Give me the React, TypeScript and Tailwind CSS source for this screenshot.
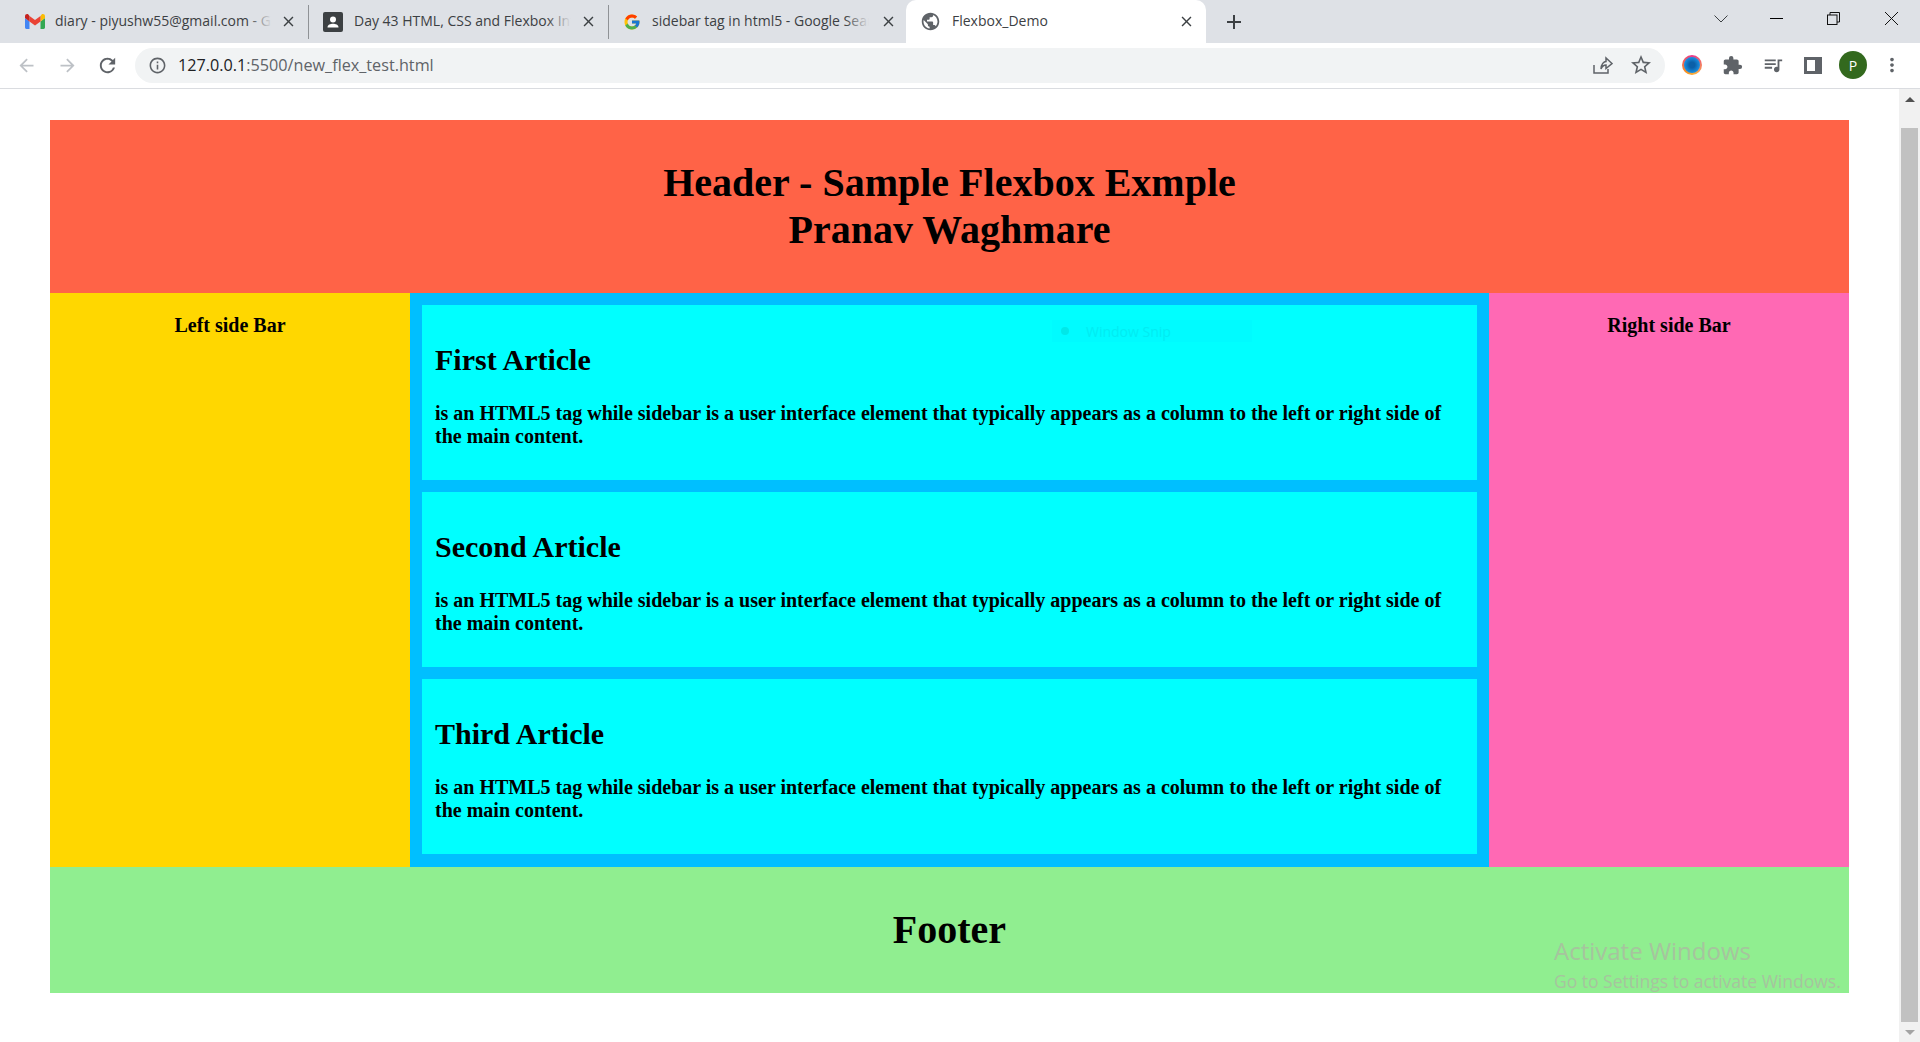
import { FcGoogle } from "react-icons/fc";
import {
  MdAdd,
  MdArrowBack,
  MdArrowForward,
  MdClose,
  MdExtension,
  MdInfoOutline,
  MdMoreVert,
  MdPublic,
  MdQueueMusic,
  MdRefresh,
  MdStarBorder,
} from "react-icons/md";
import type { ReactNode } from "react";

const body =
  "is an HTML5 tag while sidebar is a user interface element that typically appears as a column to the left or right side of the main content.";

function GmailIcon() {
  return (
    <svg width="20" height="16" viewBox="0 0 20 16">
      <path d="M1.4 15H4.5V7.4L0 4V13.6C0 14.4.6 15 1.4 15Z" fill="#4285f4" />
      <path d="M15.5 15H18.6C19.4 15 20 14.4 20 13.6V4L15.5 7.4Z" fill="#34a853" />
      <path d="M15.5 2V7.4L20 4V2.2C20 .4 18 -.6 16.6 .5Z" fill="#fbbc04" />
      <path d="M4.5 7.4V2L10 6.1 15.5 2V7.4L10 11.5Z" fill="#ea4335" />
      <path d="M0 2.2V4L4.5 7.4V2L3.4 .5C2 -.6 0 .4 0 2.2Z" fill="#c5221f" />
    </svg>
  );
}

function ContactIcon() {
  return (
    <svg width="20" height="20" viewBox="0 0 20 20">
      <rect width="20" height="20" rx="2" fill="#3c4043" />
      <circle cx="10" cy="7.5" r="3" fill="#fff" />
      <path d="M4.5 15.5C4.5 12.8 7.5 11.8 10 11.8S15.5 12.8 15.5 15.5Z" fill="#fff" />
    </svg>
  );
}

function Tab({ icon, title, pad, iconBox }: { icon: ReactNode; title: string; pad: string; iconBox: string }) {
  return (
    <div className={`flex h-[34px] w-[300px] shrink-0 items-center border-r border-[#8f9296] pr-[11px] ${pad}`}>
      <div className={`flex shrink-0 items-center ${iconBox}`}>{icon}</div>
      <div className="relative -mt-[2px] h-[20px] w-[217px] overflow-hidden whitespace-nowrap text-[14px] leading-[20px] text-[#3c4043]">
        {title}
        <div className="absolute inset-y-0 right-0 w-[24px] bg-gradient-to-r from-transparent to-[#dee1e6]" />
      </div>
      <MdClose className="ml-auto text-[#3c4043]" size={17} />
    </div>
  );
}

function Article({ title }: { title: string }) {
  return (
    <article className="h-[175px] bg-[#00ffff] px-[13px] pt-[37px] text-black">
      <h2 className="text-[30px] font-bold leading-[36px]">{title}</h2>
      <p className="mt-[24px] text-[20px] font-bold leading-[23px]">{body}</p>
    </article>
  );
}

export default function App() {
  return (
    <div className="relative flex h-[1042px] flex-col overflow-hidden bg-white font-['Liberation_Serif',serif]">
      {/* tab strip */}
      <div className="flex h-[43px] shrink-0 items-end bg-[#dee1e6] pl-[9px] font-['Open_Sans',sans-serif]">
        <div className="flex h-[43px] items-center">
          <Tab icon={<GmailIcon />} title="diary - piyushw55@gmail.com - Gmail" pad="pl-[16px]" iconBox="w-[30px]" />
          <Tab icon={<ContactIcon />} title="Day 43 HTML, CSS and Flexbox Intro" pad="pl-[14px]" iconBox="w-[31px]" />
          <Tab icon={<FcGoogle size={18} />} title="sidebar tag in html5 - Google Search" pad="pl-[14px]" iconBox="w-[29px]" />
        </div>
        <div className="-ml-[3px] flex h-[43px] w-[300px] shrink-0 items-center rounded-t-[10px] bg-white pl-[14px] pr-[11px]">
          <MdPublic className="text-[#5f6368]" size={21} />
          <span className="-mt-[2px] ml-[11px] text-[14px] text-[#3c4043]">Flexbox_Demo</span>
          <MdClose className="ml-auto text-[#3c4043]" size={17} />
        </div>
        <div className="flex h-[43px] w-[56px] items-center justify-center">
          <MdAdd className="text-[#3c4043]" size={24} />
        </div>
        <div className="ml-auto flex h-[43px] items-center pb-[6px] pr-[22px]">
          <svg width="14" height="8" viewBox="0 0 14 8" className="mr-[42px]">
            <path d="M.5.5 7 7 13.5.5" fill="none" stroke="#3c4043" />
          </svg>
          <div className="mr-[44px] h-px w-[13px] bg-black" />
          <svg width="13" height="13" viewBox="0 0 13 13" className="mr-[45px]">
            <path d="M3 3V.5H12.5V10H10" fill="none" stroke="#111" />
            <rect x=".5" y="3" width="9.5" height="9.5" fill="none" stroke="#111" />
          </svg>
          <svg width="13" height="13" viewBox="0 0 13 13">
            <path d="M0 0 13 13M13 0 0 13" stroke="#111" />
          </svg>
        </div>
      </div>

      {/* toolbar */}
      <div className="flex h-[46px] shrink-0 items-center border-b border-[#dadce0] bg-white pb-px font-['Open_Sans',sans-serif]">
        <MdArrowBack className="ml-[16px] text-[#bdc1c6]" size={21} />
        <MdArrowForward className="ml-[20px] text-[#bdc1c6]" size={21} />
        <MdRefresh className="ml-[18px] text-[#5f6368]" size={23} />
        <div className="ml-[16px] flex h-[35px] w-[1530px] items-center rounded-full bg-[#f1f3f4] pl-[13px] pr-[12px]">
          <MdInfoOutline className="text-[#5f6368]" size={19} />
          <span className="ml-[11px] text-[16.2px] text-[#5f6368]">
            <span className="text-[#202124]">127.0.0.1</span>:5500/new_flex_test.html
          </span>
          <svg width="20" height="18" viewBox="0 0 20 18" className="ml-auto mr-[16px]">
            <path d="M1 9V17H15V13M8 13C8 8 11 5.500 13 5.500V2L19 7.500 13 12.500V9C11 9 9 10.500 8 13Z" fill="none" stroke="#5f6368" strokeWidth="1.500" />
          </svg>
          <MdStarBorder className="text-[#5f6368]" size={24} />
        </div>
        <div className="ml-[17px] h-[20px] w-[20px] rounded-full bg-[conic-gradient(#e8398d,#fbb040_45%,#f7931e_60%,#e8398d)] p-[2px]">
          <div className="h-full w-full rounded-full bg-[radial-gradient(circle,#0b5fa8_25%,#1d9bf0_80%)]" />
        </div>
        <MdExtension className="ml-[20px] text-[#5f6368]" size={21} />
        <MdQueueMusic className="ml-[19px] text-[#5f6368]" size={22} />
        <div className="ml-[20px] h-[17px] w-[18px] bg-[#5f6368] py-[3px] pl-[3px]">
          <div className="h-full w-[8px] bg-white" />
        </div>
        <div className="ml-[17px] flex h-[28px] w-[28px] items-center justify-center rounded-full bg-[#33691e] text-[14px] text-white">
          P
        </div>
        <MdMoreVert className="ml-[14px] text-[#5f6368]" size={22} />
      </div>

      {/* page */}
      <div className="flex min-h-0 flex-1">
        <main className="min-w-0 flex-1 px-[50px] pt-[31px]">
          <header className="flex h-[173px] items-center justify-center bg-[#ff6347] pb-[2px] text-center">
            <h1 className="text-[40px] font-bold leading-[47px] text-black">
              Header - Sample Flexbox Exmple
              <br />
              Pranav Waghmare
            </h1>
          </header>
          <div className="flex h-[574px]">
            <aside className="w-[360px] shrink-0 bg-[#ffd700] pt-[21px] text-center text-[20px] font-bold leading-[23px] text-black">
              Left side Bar
            </aside>
            <section className="flex flex-1 flex-col gap-[12px] bg-[#00bfff] p-[12px]">
              <Article title="First Article" />
              <Article title="Second Article" />
              <Article title="Third Article" />
            </section>
            <aside className="w-[360px] shrink-0 bg-[#ff69b4] pt-[21px] text-center text-[20px] font-bold leading-[23px] text-black">
              Right side Bar
            </aside>
          </div>
          <footer className="flex h-[126px] items-center justify-center bg-[#90ee90] text-[40px] font-bold text-black">
            Footer
          </footer>
        </main>

        {/* scrollbar */}
        <div className="flex w-[21px] shrink-0 flex-col items-center bg-[#f1f1f1]">
          <div className="flex h-[39px] shrink-0 items-start justify-center pt-[8px]">
            <div className="h-0 w-0 border-x-[5px] border-b-[5px] border-x-transparent border-b-[#505050]" />
          </div>
          <div className="h-[894px] w-[17px] bg-[#c1c1c1]" />
          <div className="flex flex-1 items-end pb-[7px]">
            <div className="h-0 w-0 border-x-[5px] border-t-[5px] border-x-transparent border-t-[#a3a3a3]" />
          </div>
        </div>
      </div>

      {/* desktop overlays */}
      <div className="pointer-events-none absolute left-[1554px] top-[936px] font-['Open_Sans',sans-serif] text-[#a6c49e]">
        <div className="text-[24px] leading-[30px]">Activate Windows</div>
        <div className="mt-[4px] text-[17.5px] leading-[22px]">Go to Settings to activate Windows.</div>
      </div>
      <div className="pointer-events-none absolute left-[1052px] top-[320px] flex h-[22px] w-[200px] items-center bg-[#00fbff] pl-[9px] font-['Open_Sans',sans-serif] text-[14px] text-[#00ecf2]">
        <div className="h-[8px] w-[8px] rounded-full bg-[#00e8e8]" />
        <span className="ml-[17px]">Window Snip</span>
      </div>
    </div>
  );
}
